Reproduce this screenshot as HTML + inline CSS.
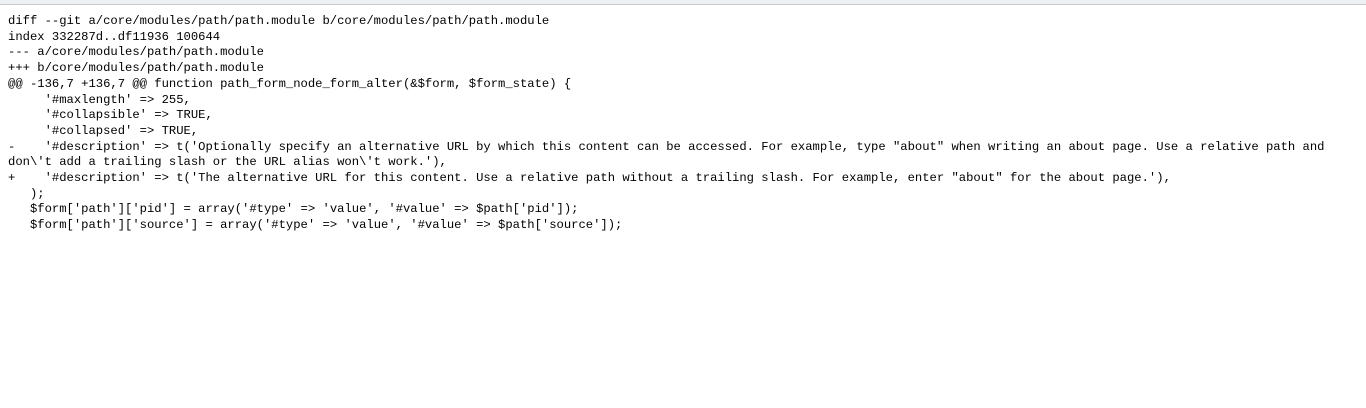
<!DOCTYPE html>
<html><head><meta charset="utf-8"><style>
html,body{margin:0;padding:0;background:#fff;width:1366px;height:408px;overflow:hidden}
.top{height:4px;background:#eef1f3;border-bottom:1px solid #c8ccd0}
pre{margin:0;position:absolute;left:8px;top:14px;width:1345px;font-family:"Liberation Mono",monospace;font-size:12.2px;line-height:15.7px;color:#000;white-space:pre-wrap;word-break:normal;overflow-wrap:normal}
</style></head><body><div class="top"></div><pre>diff --git a/core/modules/path/path.module b/core/modules/path/path.module
index 332287d..df11936 100644
--- a/core/modules/path/path.module
+++ b/core/modules/path/path.module
@@ -136,7 +136,7 @@ function path_form_node_form_alter(&amp;$form, $form_state) {
     '#maxlength' =&gt; 255,
     '#collapsible' =&gt; TRUE,
     '#collapsed' =&gt; TRUE,
-    '#description' =&gt; t('Optionally specify an alternative URL by which this content can be accessed. For example, type "about" when writing an about page. Use a relative path and don\'t add a trailing slash or the URL alias won\'t work.'),
+    '#description' =&gt; t('The alternative URL for this content. Use a relative path without a trailing slash. For example, enter "about" for the about page.'),
   );
   $form['path']['pid'] = array('#type' =&gt; 'value', '#value' =&gt; $path['pid']);
   $form['path']['source'] = array('#type' =&gt; 'value', '#value' =&gt; $path['source']);
</pre></body></html>
